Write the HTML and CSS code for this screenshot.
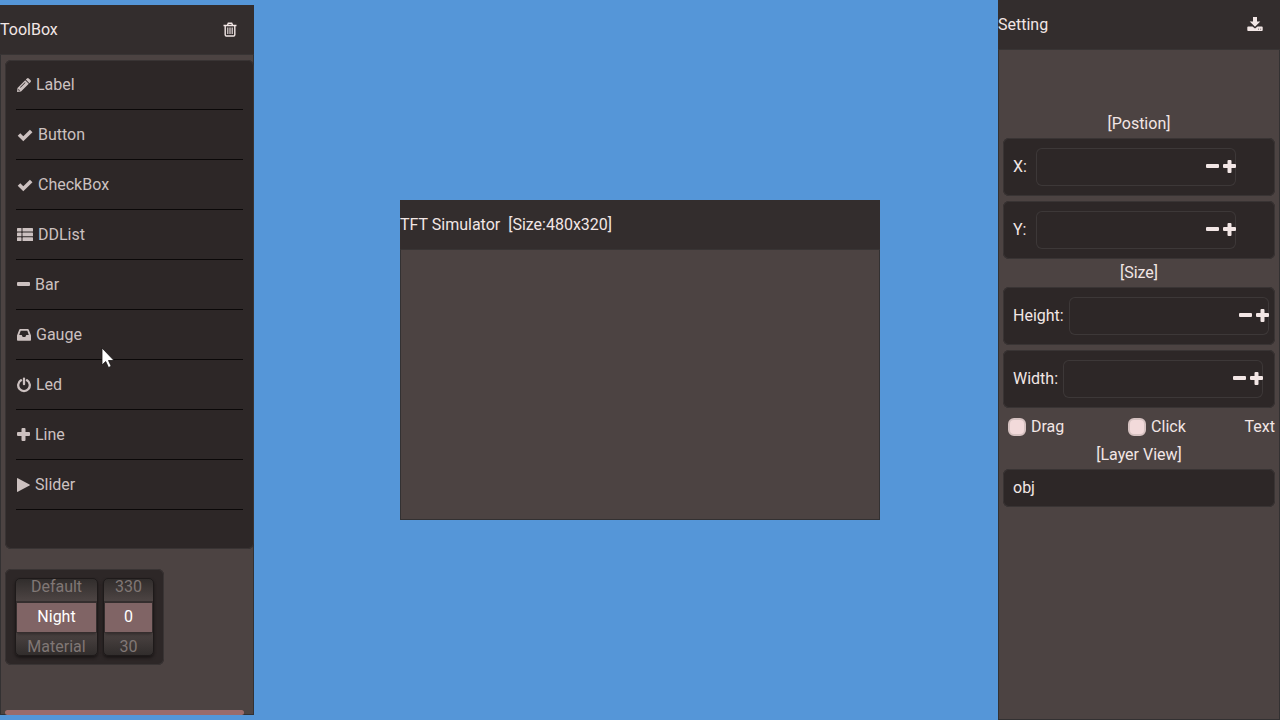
FILE: index.html
```html
<!DOCTYPE html>
<html lang="en">
<head>
<meta charset="utf-8">
<title>TFT Simulator</title>
<link rel="stylesheet" href="styles.css">
</head>
<body>
<div class="desktop">
  <aside class="panel toolbox">
    <header class="titlebar">
      <h2 class="title">ToolBox</h2>
      <button class="icon-button" type="button" aria-label="Delete">
        <svg width="14" height="16" viewBox="0 0 14 16" fill="none" stroke="currentColor"><path d="M.5 3.500h13M4.500 3l.8-1.800h3.400l.8 1.800M2.200 3.500v9.300q0 1.200 1.200 1.200h7.200q1.200 0 1.200-1.200V3.500" stroke-width="1.400"/><path d="M4.800 5.500v6.500M7 5.500v6.500M9.200 5.500v6.500" stroke-width="1.100"/></svg>
      </button>
    </header>
    <div class="toolbox-body">
      <ul class="tools">
        <li class="tool"><button class="tool-button" type="button"><svg width="14" height="14" viewBox="0 0 14 14" fill="currentColor"><path fill-rule="evenodd" d="M10 .4q.9-.8 1.800 0l1.800 1.800q.8.900 0 1.800L12.400 5.200 8.800 1.600zM8.200 2.200L11.800 5.800 4 13.500 0 14 .5 10zM1.500 10.900L1.200 12l.8.800 1.100-.3zM8 4.200L3 9.200l.5.500 5-5z"/></svg>Label</button></li>
        <li class="tool"><button class="tool-button" type="button"><svg width="16" height="16" viewBox="0 0 16 16" fill="none" stroke="currentColor" stroke-width="3.600"><path d="M2 7.500l4.300 4.300L14.200 3.900"/></svg>Button</button></li>
        <li class="tool"><button class="tool-button" type="button"><svg width="16" height="16" viewBox="0 0 16 16" fill="none" stroke="currentColor" stroke-width="3.600"><path d="M2 7.500l4.300 4.300L14.200 3.900"/></svg>CheckBox</button></li>
        <li class="tool"><button class="tool-button" type="button"><svg width="16" height="14" viewBox="0 0 16 14" fill="currentColor"><rect width="4.500" height="3.600" rx=".6"/><rect x="5.500" width="10.500" height="3.600" rx=".6"/><rect y="4.600" width="4.500" height="3.700" rx=".6"/><rect x="5.500" y="4.600" width="10.500" height="3.700" rx=".6"/><rect y="9.300" width="4.500" height="3.700" rx=".6"/><rect x="5.500" y="9.300" width="10.500" height="3.700" rx=".6"/></svg>DDList</button></li>
        <li class="tool"><button class="tool-button" type="button"><svg width="13" height="14" viewBox="0 0 13 14" fill="currentColor"><rect y="4" width="13" height="4" rx="1"/></svg>Bar</button></li>
        <li class="tool"><button class="tool-button" type="button"><svg width="14" height="14" viewBox="0 0 14 14" fill="currentColor"><path fill-rule="evenodd" d="M3.200 1h7.600q.7 0 1 .7L14 7.500V12q0 .8-.8.800H.8q-.8 0-.8-.8V7.500L2.200 1.700q.3-.7 1-.7zM3.700 2.800L2.200 7h2.500l1 1.900h2.600l1-1.900h2.500L10.300 2.800z"/></svg>Gauge</button></li>
        <li class="tool"><button class="tool-button" type="button"><svg width="14" height="16" viewBox="0 0 14 16" fill="none" stroke="currentColor" stroke-width="2.300" stroke-linecap="round"><path d="M4 3.300A5.800 5.800 0 1 0 10 3.300M7 1.600v5.600"/></svg>Led</button></li>
        <li class="tool"><button class="tool-button" type="button"><svg width="13" height="14" viewBox="0 0 13 14" fill="currentColor"><rect y="4" width="13" height="4" rx="1"/><rect x="4.500" width="4" height="13" rx="1"/></svg>Line</button></li>
        <li class="tool"><button class="tool-button" type="button"><svg width="13" height="14" viewBox="0 0 13 14" fill="currentColor"><path d="M0 .7Q0-.2.800.2L12.500 6.500q.700.500 0 1L.8 13.800Q0 14.200 0 13.300z"/></svg>Slider</button></li>
      </ul>
      <div class="pickers">
        <div class="roller roller-theme" role="listbox" aria-label="Theme">
          <div class="option" role="option">Default</div>
          <div class="option selected" role="option" aria-selected="true">Night</div>
          <div class="option" role="option">Material</div>
        </div>
        <div class="roller roller-hue" role="listbox" aria-label="Hue">
          <div class="option" role="option">330</div>
          <div class="option selected" role="option" aria-selected="true">0</div>
          <div class="option" role="option">30</div>
        </div>
      </div>
      <div class="scroll-thumb"></div>
    </div>
  </aside>

  <main class="panel simulator">
    <header class="titlebar"><h1 class="title">TFT Simulator&nbsp; [Size:480x320]</h1></header>
  </main>

  <aside class="panel setting">
    <header class="titlebar">
      <h2 class="title">Setting</h2>
      <button class="icon-button" type="button" aria-label="Save">
        <svg width="16" height="16" viewBox="0 0 16 16" fill="currentColor"><path d="M6 0h4v4.500h3.300L8 9.800 2.700 4.500H6z"/><path fill-rule="evenodd" d="M1.200 9.500h4.300l2.500 2 2.500-2h4.300q.9 0 .9.800v3q0 .8-.9.800H1.200q-.9 0-.9-.8v-3q0-.8.900-.8zM11 11.800v.8h.9v-.8zM13.200 11.800v.8h.9v-.8z"/></svg>
      </button>
    </header>
    <form class="setting-body">
      <h3 class="section">[Postion]</h3>
      <div class="box row">
        <label class="row-label" for="x">X:</label>
        <div class="spin"><input class="spin-input" id="x" type="text"><button class="step" type="button" aria-label="Decrease X"><svg width="13" height="14" viewBox="0 0 13 14" fill="currentColor"><rect y="4" width="13" height="4" rx="1"/></svg></button><button class="step" type="button" aria-label="Increase X"><svg width="13" height="14" viewBox="0 0 13 14" fill="currentColor"><rect y="4" width="13" height="4" rx="1"/><rect x="4.500" width="4" height="13" rx="1"/></svg></button></div>
      </div>
      <div class="box row">
        <label class="row-label" for="y">Y:</label>
        <div class="spin"><input class="spin-input" id="y" type="text"><button class="step" type="button" aria-label="Decrease Y"><svg width="13" height="14" viewBox="0 0 13 14" fill="currentColor"><rect y="4" width="13" height="4" rx="1"/></svg></button><button class="step" type="button" aria-label="Increase Y"><svg width="13" height="14" viewBox="0 0 13 14" fill="currentColor"><rect y="4" width="13" height="4" rx="1"/><rect x="4.500" width="4" height="13" rx="1"/></svg></button></div>
      </div>
      <h3 class="section">[Size]</h3>
      <div class="box row">
        <label class="row-label" for="h">Height:</label>
        <div class="spin"><input class="spin-input" id="h" type="text"><button class="step" type="button" aria-label="Decrease height"><svg width="13" height="14" viewBox="0 0 13 14" fill="currentColor"><rect y="4" width="13" height="4" rx="1"/></svg></button><button class="step" type="button" aria-label="Increase height"><svg width="13" height="14" viewBox="0 0 13 14" fill="currentColor"><rect y="4" width="13" height="4" rx="1"/><rect x="4.500" width="4" height="13" rx="1"/></svg></button></div>
      </div>
      <div class="box row">
        <label class="row-label" for="w">Width:</label>
        <div class="spin"><input class="spin-input" id="w" type="text"><button class="step" type="button" aria-label="Decrease width"><svg width="13" height="14" viewBox="0 0 13 14" fill="currentColor"><rect y="4" width="13" height="4" rx="1"/></svg></button><button class="step" type="button" aria-label="Increase width"><svg width="13" height="14" viewBox="0 0 13 14" fill="currentColor"><rect y="4" width="13" height="4" rx="1"/><rect x="4.500" width="4" height="13" rx="1"/></svg></button></div>
      </div>
      <div class="checks">
        <label class="check"><input class="check-input" type="checkbox">Drag</label>
        <label class="check"><input class="check-input" type="checkbox">Click</label>
        <span>Text</span>
      </div>
      <h3 class="section">[Layer View]</h3>
      <div class="box layer">obj</div>
    </form>
  </aside>

  <svg class="pointer" width="14" height="22" viewBox="0 0 14 22"><path d="M1 1v17l3.700-3.500 2.800 6 2.700-1.200-2.700-5.800H13z" fill="#fff" stroke="#1c1818" stroke-width=".8"/></svg>
</div>
</body>
</html>
```

FILE: styles.css
```css
* { box-sizing: border-box; }

body {
  margin: 0;
  font: 16px/18px Roboto, sans-serif;
  color: #f2e6e5;
  background: #5596d8;
}

.desktop {
  position: relative;
  display: flex;
  justify-content: space-between;
  min-height: 100vh;
  overflow: hidden;
}

.panel {
  display: flex;
  flex-direction: column;
  background: #4c4342;
  box-shadow: inset 0 0 0 1px #333132;
}

.titlebar {
  display: flex;
  align-items: center;
  justify-content: space-between;
  height: 50px;
  padding-right: 17px;
  background: #332d2d;
  border-bottom: 1px solid #383434;
}

.title,
.section {
  margin: 0;
  font-size: 16px;
  font-weight: 400;
}

.section { text-align: center; }

button {
  padding: 0;
  border: 0;
  background: none;
  color: inherit;
  font: inherit;
}

svg { display: block; flex: none; }

.toolbox {
  width: 254px;
  margin: 5px 0;
}

.toolbox-body {
  display: flex;
  flex: 1;
  flex-direction: column;
  align-items: flex-start;
  padding: 5px 0 0 5px;
}

.tools,
.pickers,
.box {
  background: #2d2727;
  border-radius: 6px;
  box-shadow: inset 0 0 0 1px #393434;
}

.tools {
  align-self: stretch;
  margin: 0 0 20px;
  padding: 0 11px 39px;
  list-style: none;
}

.tool { border-bottom: 1px solid #0b0808; }

.tool-button {
  display: flex;
  align-items: center;
  gap: 5px;
  width: 100%;
  height: 49px;
  padding-left: 1px;
  color: #ccc1c0;
}

.pickers {
  display: flex;
  gap: 5px;
  padding: 9px 10px;
}

.roller {
  display: flex;
  flex-direction: column;
  justify-content: center;
  height: 78px;
  overflow: hidden;
  border: 1px solid #1e1a1a;
  border-radius: 5px;
  background: linear-gradient(#312d2c, #504746 32%, #504746 66%, #312d2c);
  box-shadow: 0 2px 3px #1a1616;
  text-align: center;
}

.roller-theme { width: 83px; }
.roller-hue { width: 51px; }

.option {
  flex: none;
  line-height: 30px;
  color: #807775;
}

.option.selected {
  margin: 0 1px;
  background: #806465;
  color: #fff;
  box-shadow: inset 0 1px #352e2e, 0 0 0 1px #352e2e, 0 2px 3px #2d2727;
}

.scroll-thumb {
  width: 239px;
  height: 5px;
  margin-top: auto;
  border-radius: 3px;
  background: #9b6b6b;
}

/* Floating window in the middle of the desktop */
.simulator {
  position: absolute;
  inset: 0;
  width: 480px;
  height: 320px;
  margin: auto;
}

.setting { width: 282px; }

.setting-body {
  display: flex;
  flex-direction: column;
  gap: 5px;
  padding: 65px 5px 5px;
}

.row {
  display: flex;
  align-items: center;
  gap: 5px;
  padding: 10px 5px 10px 10px;
}

.row-label { min-width: 18px; }

.spin {
  display: flex;
  flex: none;
  align-items: center;
  gap: 4px;
  width: 200px;
  height: 38px;
  border-radius: 6px;
  box-shadow: inset 0 0 0 1px #3d3838;
}

.spin-input {
  flex: 1;
  min-width: 0;
  height: 100%;
  padding: 0 8px;
  border: 0;
  background: none;
  color: inherit;
  font: inherit;
}

.checks {
  display: flex;
  align-items: center;
  justify-content: space-between;
}

.check {
  display: flex;
  align-items: center;
  gap: 5px;
  padding: 5px;
}

.check-input {
  appearance: none;
  width: 18px;
  height: 18px;
  margin: 0;
  border: 2px solid #d6c2c1;
  border-radius: 6px;
  background: #f2dada;
}

.layer { padding: 10px; }

.pointer {
  position: absolute;
  left: 101px;
  top: 347px;
}
```
